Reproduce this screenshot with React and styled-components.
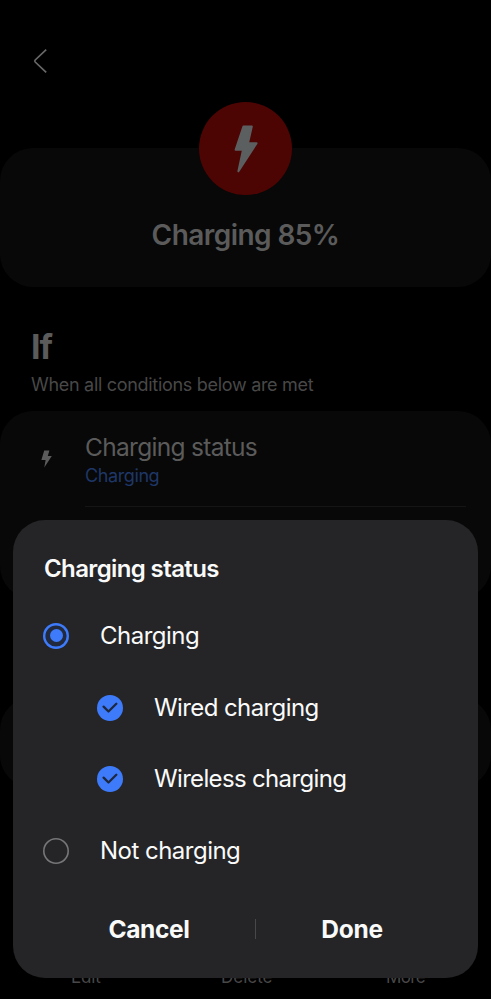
import { useState } from "react";
import styled, { createGlobalStyle } from "styled-components";

const options = [
  { id: "wired", label: "Wired charging", spacing: "-0.6px" },
  { id: "wireless", label: "Wireless charging", spacing: "-0.66px" },
];

function Bolt({ width, height, color }) {
  return (
    <svg width={width} height={height} viewBox="0 0 24 48" fill={color} stroke={color} strokeWidth="2" strokeLinejoin="round">
      <path d="M9.4 1.6H17.8L14 18.2H22.6L4.4 46.3L9 24.8H1.6Z" />
    </svg>
  );
}

function SmallBolt() {
  return (
    <svg width="11" height="18" viewBox="0 0 11 18" fill="#5b5b5b">
      <path d="M3.2 0.4H8.4L6.8 6H10.8L3.3 17.6L4.6 9.9H0.4Z" />
    </svg>
  );
}

function App() {
  const [charging, setCharging] = useState(true);
  const [checked, setChecked] = useState({ wired: true, wireless: true });

  const toggle = (id) => setChecked({ ...checked, [id]: !checked[id] });

  return (
    <Screen>
      <GlobalStyle />
      <TopBar>
        <svg width="15" height="24" viewBox="0 0 15 24" fill="none" stroke="#686868" strokeWidth="1.7">
          <path d="M13.2 0.7L2.2 11Q1.3 12 2.2 13L13.2 23.3" />
        </svg>
      </TopBar>
      <Hero>
        <HeroIcon>
          <Bolt width={24} height={48} color="#5c5f60" />
        </HeroIcon>
        <Text $size={28} $weight={600} $color="#5b5b5b" $spacing="-0.56px">
          Charging 85%
        </Text>
      </Hero>
      <Section>
        <Text as="h1" $size={34} $weight={700} $color="#5b5b5b" $line={42} $spacing="-1px">
          If
        </Text>
        <Text $size={18} $color="#484848" $line={22} $spacing="-0.3px">
          When all conditions below are met
        </Text>
      </Section>
      <Conditions>
        <ConditionIcon>
          <SmallBolt />
        </ConditionIcon>
        <ConditionBody>
          <Text $size={24.5} $color="#5b5b5b" $line={32} $spacing="-0.7px">
            Charging status
          </Text>
          <Text $size={18} $color="#1f3767" $line={26} $spacing="-0.4px">
            Charging
          </Text>
        </ConditionBody>
      </Conditions>
      <EmptyCard />
      <BottomBar>
        <Text $size={17} $color="#484848" $spacing="-0.2px">Edit</Text>
        <Text $size={17} $color="#484848">Delete</Text>
        <Text $size={17} $color="#484848" $spacing="-0.6px">More</Text>
      </BottomBar>

      <Dialog role="dialog">
        <DialogTitle>
          <Text as="h2" $size={24} $weight={600} $spacing="-0.62px">
            Charging status
          </Text>
        </DialogTitle>
        <Option onClick={() => setCharging(true)}>
          <Radio $on={charging} />
          <Text $size={24} $spacing="-0.52px">Charging</Text>
        </Option>
        {options.map((option) => (
          <Option key={option.id} $nested onClick={() => toggle(option.id)}>
            <Check $on={checked[option.id]}>
              <svg width="16" height="12" viewBox="0 0 16 12" fill="none" stroke="#1d2840" strokeWidth="2.3" strokeLinecap="round" strokeLinejoin="round">
                <path d="M1.6 4.6L6.5 9.5L14.3 1.8" />
              </svg>
            </Check>
            <Text $size={24} $spacing={option.spacing}>
              {option.label}
            </Text>
          </Option>
        ))}
        <Option onClick={() => setCharging(false)}>
          <Radio $on={!charging} />
          <Text $size={24} $spacing="-0.52px">Not charging</Text>
        </Option>
        <Actions>
          <Action>
            <Text $size={24.5} $weight={700} $spacing="-0.4px">Cancel</Text>
          </Action>
          <Separator />
          <Action>
            <Text $size={24.5} $weight={700} $spacing="-0.3px">Done</Text>
          </Action>
        </Actions>
      </Dialog>
    </Screen>
  );
}

const GlobalStyle = createGlobalStyle`
  * {
    box-sizing: border-box;
  }

  body {
    margin: 0;
    background: #000;
    font-family: Inter, Roboto, sans-serif;
  }
`;

const Screen = styled.div`
  position: relative;
  display: flex;
  flex-direction: column;
  width: 491px;
  height: 999px;
  overflow: hidden;
  background: #000;
`;

const Text = styled.span`
  margin: 0;
  font-size: ${(p) => p.$size}px;
  font-weight: ${(p) => p.$weight || 400};
  line-height: ${(p) => (p.$line ? `${p.$line}px` : "30px")};
  letter-spacing: ${(p) => p.$spacing || "normal"};
  color: ${(p) => p.$color || "#fafafa"};
  white-space: nowrap;
`;

const TopBar = styled.div`
  display: flex;
  align-items: flex-end;
  height: 73px;
  padding-left: 33px;
  margin-bottom: 75px;
`;

const Hero = styled.div`
  display: flex;
  flex-direction: column;
  align-items: center;
  height: 139px;
  border-radius: 33px;
  background: #080808;
`;

const HeroIcon = styled.div`
  display: flex;
  align-items: center;
  justify-content: center;
  width: 93px;
  height: 93px;
  margin-top: -46px;
  margin-bottom: 25px;
  flex: none;
  border-radius: 50%;
  background: #4d0504;
`;

const Section = styled.div`
  display: flex;
  flex-direction: column;
  height: 124px;
  padding: 39px 0 0 31px;
  gap: 6px;
`;

const Conditions = styled.div`
  display: flex;
  height: 188px;
  padding-right: 25px;
  border-radius: 33px;
  background: #080808;
`;

const ConditionIcon = styled.div`
  width: 85px;
  padding: 39px 0 0 41px;
`;

const ConditionBody = styled.div`
  display: flex;
  flex-direction: column;
  flex: 1;
  height: 96px;
  padding-top: 20px;
  border-bottom: 1px solid #151515;
`;

const EmptyCard = styled.div`
  height: 91px;
  margin-top: 98px;
  border-radius: 33px;
  background: #080808;
`;

const BottomBar = styled.div`
  display: grid;
  grid-template-columns: 150px 165px auto;
  margin-top: auto;
  padding: 0 66px 7px 71px;
`;

const Dialog = styled.div`
  position: absolute;
  top: 520px;
  left: 13px;
  display: flex;
  flex-direction: column;
  width: 465px;
  height: 458px;
  border-radius: 32px;
  background: #252527;
`;

const DialogTitle = styled.div`
  padding: 34px 0 0 31px;
  height: 80px;
`;

const Option = styled.div`
  display: flex;
  align-items: center;
  gap: 31px;
  height: 71.8px;
  padding-left: ${(p) => (p.$nested ? "84px" : "30px")};
`;

const Radio = styled.span`
  display: flex;
  align-items: center;
  justify-content: center;
  width: 26px;
  height: 26px;
  border-radius: 50%;
  background: ${(p) => (p.$on ? "#212a3e" : "transparent")};
  box-shadow: inset 0 0 0 ${(p) => (p.$on ? "2.4px #3e7bfa" : "1.6px #767678")};

  &::after {
    content: "";
    width: 13px;
    height: 13px;
    border-radius: 50%;
    background: ${(p) => (p.$on ? "#3e7bfa" : "transparent")};
  }
`;

const Check = styled.span`
  display: flex;
  align-items: center;
  justify-content: center;
  width: 26px;
  height: 26px;
  border-radius: 50%;
  background: ${(p) => (p.$on ? "#3e7bfa" : "transparent")};
`;

const Actions = styled.div`
  display: grid;
  grid-template-columns: 212px 1px 192px;
  align-items: center;
  height: 84px;
  padding-left: 30px;
`;

const Action = styled.button`
  display: flex;
  justify-content: center;
  padding: 0;
  border: none;
  background: none;
  font-family: inherit;
`;

const Separator = styled.span`
  width: 1px;
  height: 20px;
  background: #48484a;
`;

export default App;
